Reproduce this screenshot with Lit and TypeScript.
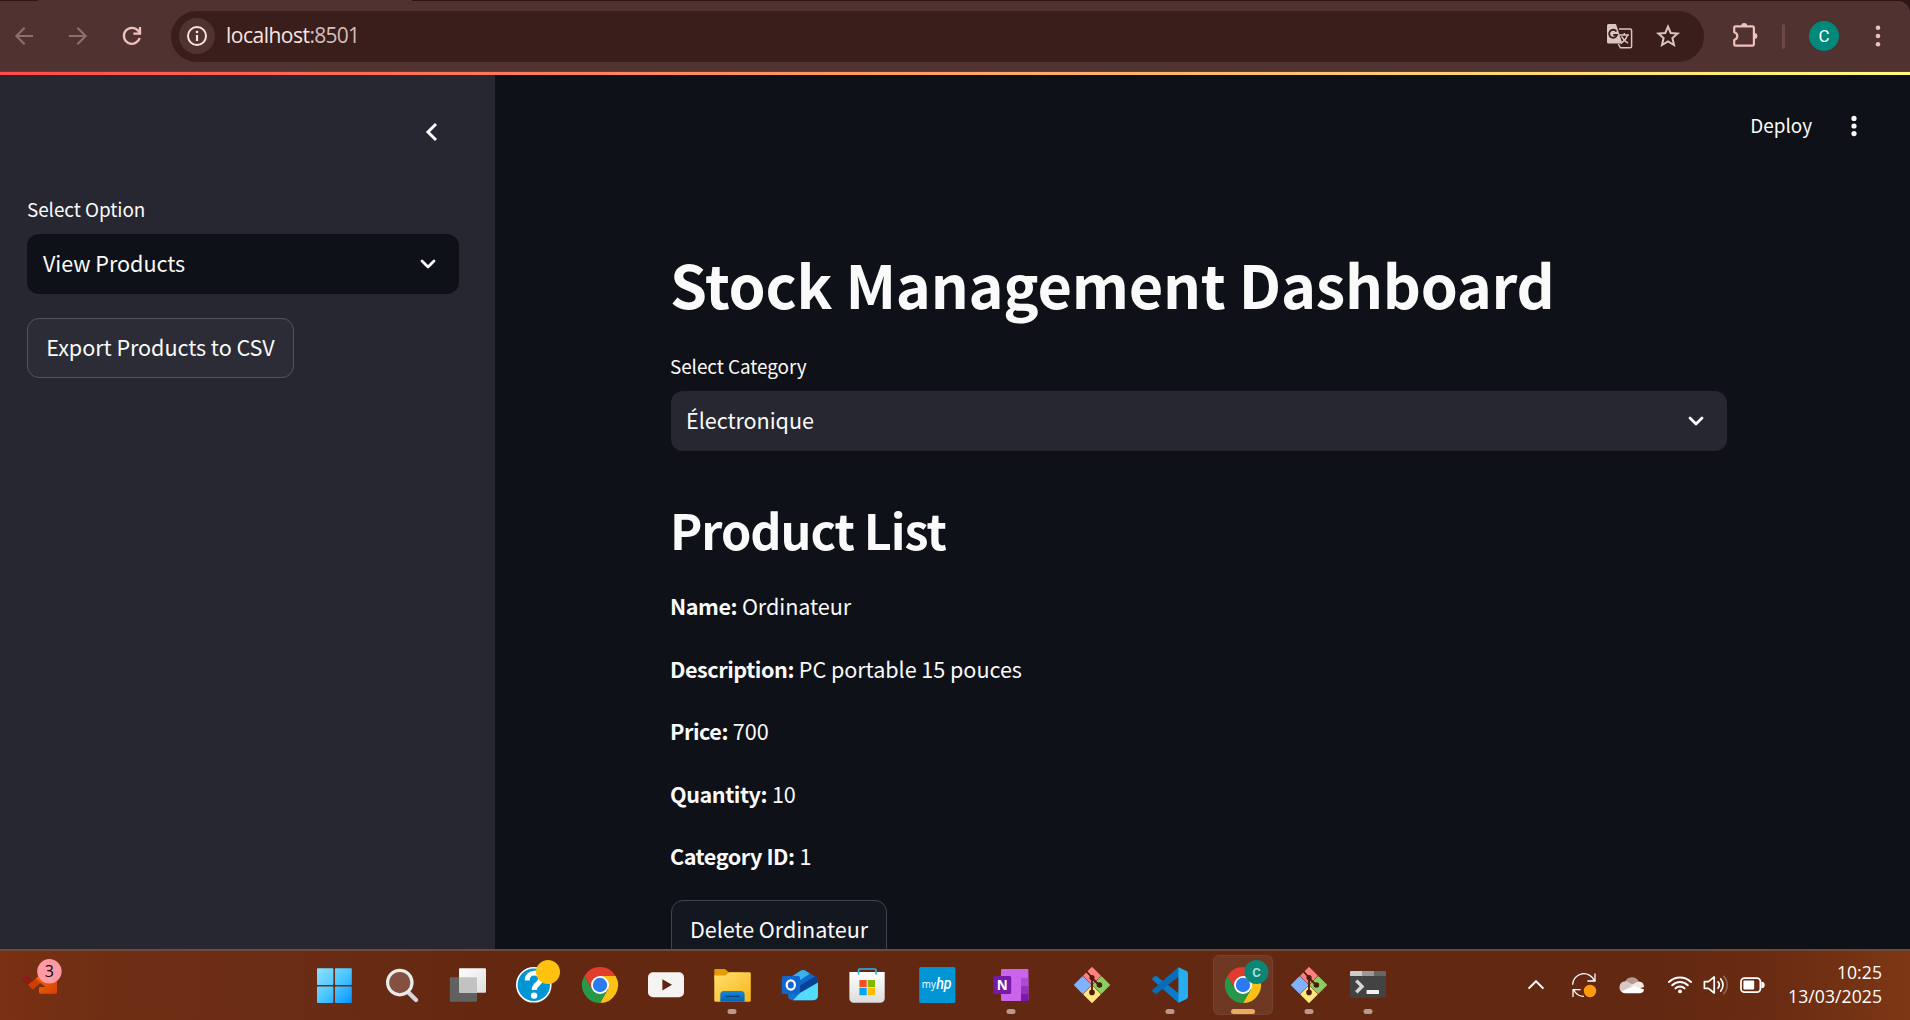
import { LitElement, html, css, svg, nothing } from "lit";
import { customElement, property } from "lit/decorators.js";

const chromeLogo = svg`
  <path d="M30 30 L30 21 H45.6 A18 18 0 0 1 30 48 L37.8 34.5 Z" fill="#fbc116"/>
  <path d="M14.4 21 A18 18 0 0 1 45.6 21 H30 L22.2 34.5Z" fill="#e33b2e"/>
  <path d="M14.4 21 L22.2 34.5 L30 30 L37.8 34.5 L30 48 A18 18 0 0 1 14.4 21 Z" fill="#279847"/>
  <circle cx="30" cy="30" r="9" fill="#fff"/>
  <circle cx="30" cy="30" r="7.2" fill="#2a7af0"/>`;

const gitLogo = svg`
  <g stroke-linejoin="round" stroke-width="1.4">
    <path d="M30 12.7 L38 20.7 L30 28.7 L22 20.7 Z" fill="#ff8080" stroke="#ff8080"/>
    <path d="M39.3 22 L47.3 30 L39.3 38 L31.3 30 Z" fill="#8bcf63" stroke="#8bcf63"/>
    <path d="M20.7 22 L28.7 30 L20.7 38 L12.7 30 Z" fill="#80b3ff" stroke="#80b3ff"/>
    <path d="M30 31.3 L38 39.3 L30 47.3 L22 39.3 Z" fill="#ffe680" stroke="#ffe680"/>
  </g>
  <path d="M24.5 16.5 L30 22.5 V37 M30 23 L37 30" stroke="#4c1b0c" stroke-width="1.8" fill="none"/>
  <g fill="#4c1b0c"><circle cx="30" cy="22.6" r="2.6"/><circle cx="37.4" cy="30" r="2.8"/><circle cx="30" cy="37.4" r="2.8"/></g>`;

const icons: Record<string, unknown> = {
  start: svg`
    <defs><linearGradient id="w" gradientUnits="userSpaceOnUse" x1="13" y1="13" x2="48" y2="48">
      <stop offset="0" stop-color="#8fe0ff"/><stop offset=".5" stop-color="#4cc8ff"/><stop offset="1" stop-color="#0793ff"/></linearGradient></defs>
    <g fill="url(#w)"><rect x="13" y="13.2" width="16.4" height="16.8" rx=".8"/><rect x="31" y="13.2" width="16.8" height="16.8" rx=".8"/>
    <rect x="13" y="31.6" width="16.4" height="16.4" rx=".8"/><rect x="31" y="31.6" width="16.8" height="16.4" rx=".8"/></g>`,
  search: svg`
    <path d="M36.5 37.5 L44 45" stroke="#d3d7dd" stroke-width="4.4" stroke-linecap="round"/>
    <circle cx="27.8" cy="27.6" r="12.2" fill="#84503f" stroke="#e9ebee" stroke-width="3.2"/>`,
  views: svg`
    <defs><linearGradient id="v" x1="0" y1="0" x2="1" y2="1"><stop offset="0" stop-color="#fff"/><stop offset="1" stop-color="#dedede"/></linearGradient></defs>
    <rect x="11.8" y="22.3" width="27.2" height="24.4" rx="1" fill="#616161"/>
    <rect x="21" y="13.2" width="27" height="24.6" rx="1" fill="url(#v)"/>
    <path d="M21 22.3 H38 a1 1 0 0 1 1 1 V37.8 H22 a1 1 0 0 1 -1 -1 Z" fill="#c2c2c2"/>`,
  help: svg`
    <circle cx="29.8" cy="29.8" r="17" fill="#0096d6" stroke="#fff" stroke-width="1.6"/>
    <path d="M23.2 25.4 C23.2 15.8 37.2 16 36.6 24.2 C36.2 29.2 30.2 29 30.2 35" fill="none" stroke="#fff" stroke-width="5"/>
    <circle cx="30.1" cy="40.6" r="3.2" fill="#fff"/>
    <circle cx="44" cy="17" r="12" fill="#ffc20e"/>`,
  chrome: chromeLogo,
  youtube: svg`
    <rect x="12" y="17.3" width="36" height="25" rx="5" fill="#f6f3f2"/>
    <path d="M26.4 24.3 L36 29.8 L26.4 35.4 Z" fill="#5d2511"/>`,
  explorer: svg`
    <defs><linearGradient id="f" x1="0" y1="0" x2="1" y2="1"><stop offset="0" stop-color="#ffe06e"/><stop offset="1" stop-color="#f7b51a"/></linearGradient>
    <linearGradient id="fb" x1="0" y1="0" x2="0" y2="1"><stop offset="0" stop-color="#1389dc"/><stop offset="1" stop-color="#0462b0"/></linearGradient></defs>
    <path d="M12.3 15.2 a1.2 1.2 0 0 1 1.2 -1.2 H23 L27 17.5 H40 V24 H12.3 Z" fill="#e29c06"/>
    <path d="M12.3 20.5 H23.5 L27.3 17.2 H47.6 a1.2 1.2 0 0 1 1.2 1.2 V45.6 a1.1 1.1 0 0 1 -1.2 1.1 H13.4 a1.1 1.1 0 0 1 -1.1 -1.1 Z" fill="url(#f)"/>
    <path d="M18.3 46.7 V39.6 a3.6 3.6 0 0 1 3.6 -3.6 H39 a3.6 3.6 0 0 1 3.6 3.6 V46.7 Z" fill="url(#fb)"/>
    <path d="M23.5 41.4 H37.5" stroke="#06427c" stroke-width="1.3"/>`,
  outlook: svg`
    <path d="M18 24 L31 15.6 Q33 14.6 35 15.6 L46 22.6 Q48 24 48 26 V40 Q48 45.2 43 45.2 H23 Q18 45.2 18 40 Z" fill="#1273cf"/>
    <path d="M18 24 L31 15.6 Q33 14.6 35 15.6 L40 18.8 L24 29 L18 30 Z" fill="#35b4ea"/>
    <path d="M28 27 L40 18.8 L46 22.6 L30 33 Z" fill="#1168cb"/>
    <path d="M30 30.5 L46 21 Q48 22.6 48 26 V28 L30 38 Z" fill="#0a4298"/>
    <path d="M48 27.6 V40 Q48 45.2 43 45.2 H23 L30 38 Z" fill="#52dcfa"/>
    <rect x="11.8" y="21" width="18.2" height="18" rx="1.8" fill="#1066cc"/>
    <ellipse cx="20.8" cy="30" rx="4.1" ry="4.6" fill="none" stroke="#fff" stroke-width="2.2"/>`,
  store: svg`
    <defs><linearGradient id="s" x1="0" y1="0" x2="0" y2="1"><stop offset="0" stop-color="#fff"/><stop offset="1" stop-color="#dcdcdc"/></linearGradient></defs>
    <path d="M12.4 17 H47.7 V43.5 a4.3 4.3 0 0 1 -4.3 4.3 H16.7 a4.3 4.3 0 0 1 -4.3 -4.3 Z" fill="url(#s)"/>
    <path d="M21.6 19.6 V15 a1 1 0 0 1 1 -1 H38 a1 1 0 0 1 1 1 V19.6" fill="none" stroke="#2bb5ea" stroke-width="1.7"/>
    <rect x="22.4" y="25" width="7.3" height="7.2" fill="#f25022"/><rect x="30.7" y="25" width="7.3" height="7.2" fill="#7fba00"/>
    <rect x="22.4" y="33" width="7.3" height="7.2" fill="#00a4ef"/><rect x="30.7" y="33" width="7.3" height="7.2" fill="#ffb900"/>`,
  myhp: svg`
    <rect x="12.2" y="12.1" width="36.2" height="35.8" rx="1.5" fill="#0096d6"/>
    <text x="14.8" y="33.2" font-family="Open Sans, sans-serif" font-size="10.5" textLength="14" lengthAdjust="spacingAndGlyphs" fill="#fff">my</text>
    <text x="29.2" y="33.8" font-family="Roboto, sans-serif" font-size="17" font-style="italic" font-weight="500" textLength="15.4" lengthAdjust="spacingAndGlyphs" fill="#fff">hp</text>`,
  onenote: svg`
    <path d="M20 15.2 a1.2 1.2 0 0 1 1.2 -1.2 H46.2 a1.2 1.2 0 0 1 1.2 1.2 V44.8 a1.2 1.2 0 0 1 -1.2 1.2 H21.2 a1.2 1.2 0 0 1 -1.2 -1.2 Z" fill="#cb64ea"/>
    <rect x="40" y="22.8" width="7.4" height="8.2" fill="#ae4bd5"/><rect x="40" y="31" width="7.4" height="7.4" fill="#9332bf"/><rect x="40" y="38.4" width="7.4" height="7.6" fill="#7719aa"/>
    <rect x="12.2" y="21" width="18" height="18" rx="1.6" fill="#7719aa"/>
    <text x="21.2" y="35" text-anchor="middle" font-family="Open Sans, sans-serif" font-size="13.5" font-weight="700" fill="#fff">N</text>`,
  git: gitLogo,
  vscode: svg`
    <path d="M12.6 23 L14.8 21.2 Q15.8 20.6 16.8 21.3 L39 38.6 V47.6 L38 47.4 L12.6 25 Q11.8 24 12.6 23 Z" fill="#0a7cc8"/>
    <path d="M12.6 36.8 L14.8 38.6 Q15.8 39.3 16.8 38.6 L39 21.4 V12.4 L38 12.6 L12.6 34.8 Q11.8 35.8 12.6 36.8 Z" fill="#0a6cb4"/>
    <path d="M38.4 12.2 L46.6 16 Q48 16.8 48 18.2 V41.8 Q48 43.2 46.6 44 L38.4 47.8 Z" fill="#29adf1"/>`,
  chromeProfile: svg`${chromeLogo}
    <circle cx="43.4" cy="17" r="12" fill="#0a8576"/>
    <text x="43.4" y="21.7" text-anchor="middle" font-family="Roboto, sans-serif" font-size="13" font-weight="700" fill="#a9dcd5">C</text>`,
  terminal: svg`
    <path d="M12 18 a2 2 0 0 1 2 -2 H46 a2 2 0 0 1 2 2 V41 a1.8 1.8 0 0 1 -1.8 1.8 H13.8 A1.8 1.8 0 0 1 12 41 Z" fill="#434343"/>
    <path d="M12 21 V17 a1 1 0 0 1 1 -1 H24 V21 Z" fill="#ccc"/><path d="M24 16 H36 V21 H24 Z" fill="#999"/><path d="M36 16 H47 a1 1 0 0 1 1 1 V21 H36 Z" fill="#666"/>
    <path d="M18.3 25.6 L24 31.4 L18.3 37.2" fill="none" stroke="#d8d8d8" stroke-width="3.4"/>
    <rect x="28.6" y="35" width="12.4" height="4" rx=".6" fill="#f1f1f1"/>`,
};

interface TaskApp { icon: string; state?: "running" | "active"; }

const apps: TaskApp[] = [
  { icon: "start" }, { icon: "search" }, { icon: "views" }, { icon: "help" },
  { icon: "chrome" }, { icon: "youtube" }, { icon: "explorer", state: "running" },
  { icon: "outlook" }, { icon: "store" }, { icon: "myhp" },
  { icon: "onenote", state: "running" }, { icon: "git" },
  { icon: "vscode", state: "running" }, { icon: "chromeProfile", state: "active" },
  { icon: "git", state: "running" }, { icon: "terminal", state: "running" },
];

@customElement("browser-toolbar")
class BrowserToolbar extends LitElement {
  static styles = css`
    :host { display: block; box-sizing: border-box; height: 72px; padding-top: 1px;
      background: linear-gradient(90deg, #2e1614 38px, #503331 38px, #503331 412px, #2e1614 412px); }
    .bar { box-sizing: border-box; height: 71px; display: flex; align-items: center; background: #503331;
      border-bottom: 1px solid #54403a; border-radius: 0 12px 0 0; padding: 0 14px 0 6px; }
    svg { display: block; flex: none; }
    .nav { display: flex; gap: 18px; color: #8e6f6c; }
    .reload { color: #efc1bb; }
    .address { box-sizing: border-box; display: flex; align-items: center; width: 1533px; height: 51px; margin-left: 21px;
      border-radius: 26px; background: #3a1e1b; padding: 0 18px 0 8px; color: #d9c5c2; }
    .info { display: flex; width: 36px; height: 36px; border-radius: 50%; background: #503331; align-items: center; justify-content: center; }
    .url { flex: 1; margin-left: 11px; padding-bottom: 2px; font: 21px/30px "Open Sans", sans-serif; letter-spacing: -0.75px; color: #d3bfbc; white-space: nowrap; }
    .host { color: #f8e5e2; letter-spacing: -0.5px; }
    .actions { display: flex; gap: 13px; }
    .ext { margin-left: 23px; color: #efc1bb; }
    .sep { width: 3px; height: 25px; border-radius: 2px; background: #6d4946; margin-left: 19px; }
    .avatar { width: 30px; height: 30px; border-radius: 50%; background: #00897b; margin-left: 24px; text-align: center;
      font: 17px/30px Roboto, sans-serif; color: #fff; }
    .menu { margin-left: 21px; color: #efc1bb; }
  `;
  render() {
    return html`<div class="bar">
      <div class="nav">
        <svg width="36" height="36" viewBox="0 0 36 36" fill="none" stroke="currentColor" stroke-width="2.1"><path d="M27 18 H10.5 M18.6 9.8 L10.4 18 L18.6 26.2"/></svg>
        <svg width="36" height="36" viewBox="0 0 36 36" fill="none" stroke="currentColor" stroke-width="2.1"><path d="M9 18 H25.5 M17.4 9.8 L25.6 18 L17.4 26.2"/></svg>
        <svg class="reload" width="36" height="36" viewBox="0 0 36 36" fill="none" stroke="currentColor" stroke-width="2.3"><path d="M25.6 20 A8 8 0 1 1 24 12.6 L25.6 14.6"/><path d="M26 9 V15.6 H19.4"/></svg>
      </div>
      <div class="address">
        <div class="info"><svg width="22" height="22" viewBox="0 0 22 22"><circle cx="11" cy="11" r="9" fill="none" stroke="#f8e5e2" stroke-width="2"/><path d="M11 10 V16" stroke="#f8e5e2" stroke-width="2.2"/><circle cx="11" cy="7" r="1.3" fill="#f8e5e2"/></svg></div>
        <div class="url"><span class="host">localhost</span>:8501</div>
        <div class="actions">
          <svg width="36" height="36" viewBox="0 0 36 36">
            <path d="M18 11 H29 a1.6 1.6 0 0 1 1.6 1.6 V28.2 a1.6 1.6 0 0 1 -1.6 1.6 H19.4 L17.4 26" fill="none" stroke="#d9c5c2" stroke-width="1.5"/>
            <path d="M7.6 6 H15 L21.4 25.6 H7.6 A1.6 1.6 0 0 1 6 24 V7.6 A1.6 1.6 0 0 1 7.6 6 Z" fill="#d9c5c2"/>
            <path d="M18.3 17 H28 M23.3 15 V17 M26.4 17 Q25 22 19.8 25.4 M20.6 18.4 Q22.6 22.4 27 25.2" fill="none" stroke="#d9c5c2" stroke-width="1.5"/>
            <path d="M15.4 13.4 A4 4 0 1 0 16 16.8 H12.2" fill="none" stroke="#3a1e1b" stroke-width="1.8"/>
          </svg>
          <svg width="36" height="36" viewBox="0 0 36 36"><path d="M18 8.6 L20.7 15 L27.6 15.6 L22.4 20.1 L24 27 L18 23.3 L12 27 L13.6 20.1 L8.4 15.6 L15.3 15 Z" fill="none" stroke="currentColor" stroke-width="2" stroke-linejoin="miter"/></svg>
        </div>
      </div>
      <svg class="ext" width="36" height="36" viewBox="0 0 36 36"><path d="M7.2 9.6 a1.2 1.2 0 0 1 1.2 -1.2 H25.3 a1.6 1.6 0 0 1 1.6 1.6 V26 a1.6 1.6 0 0 1 -1.6 1.6 H8.4 a1.2 1.2 0 0 1 -1.2 -1.2 V22 a4 4 0 0 0 0 -7.8 Z" fill="none" stroke="currentColor" stroke-width="2.2" stroke-linejoin="round"/><path d="M14.2 8 a3 3 0 0 1 6 0 Z M27.4 15 a3 3 0 0 1 0 6 Z" fill="currentColor"/></svg>
      <div class="sep"></div>
      <div class="avatar">C</div>
      <svg class="menu" width="36" height="36" viewBox="0 0 36 36" fill="currentColor"><circle cx="18" cy="9.8" r="2.3"/><circle cx="18" cy="18" r="2.3"/><circle cx="18" cy="26.2" r="2.3"/></svg>
    </div>`;
  }
}

@customElement("select-field")
class SelectField extends LitElement {
  @property() label = "";
  @property() value = "";
  static styles = css`
    :host { display: block; }
    .label { font-size: 18.9px; line-height: 32px; height: 32px; white-space: nowrap; letter-spacing: -0.05px; }
    .box { box-sizing: border-box; display: flex; align-items: center; justify-content: space-between; height: 60px; margin-top: 9px;
      border-radius: 12px; background: var(--select-bg, #262730); padding: 0 19px 0 16px; }
    .value { font-size: 21.6px; line-height: 38px; padding-bottom: 2px; white-space: nowrap; letter-spacing: -0.05px; }
    .label, .value { margin-left: var(--text-shift, 0); }
    svg { display: block; }
  `;
  render() {
    return html`<div class="label">${this.label}</div>
      <div class="box"><span class="value">${this.value}</span>
      <svg width="24" height="24" viewBox="0 0 24 24" fill="none" stroke="#fafafa" stroke-width="2.8" stroke-linecap="round" stroke-linejoin="round"><path d="M6 9 L12 15 L18 9"/></svg></div>`;
  }
}

@customElement("task-bar")
class TaskBar extends LitElement {
  static styles = css`
    :host { display: block; }
    .bar { box-sizing: border-box; height: 71px; display: flex; border-top: 2px solid #714936; padding-top: 4px;
      background: linear-gradient(90deg, #7a3013 0, #6e2e14 110px, #6a2c14 300px, #642811 480px, #632811 1650px, #6a2c12 1780px, #7d3715 1910px);
      color: #fff; }
    .widget { width: 304px; height: 60px; }
    .apps { display: grid; height: 60px;
      grid-template-columns: 68px 66px 66px 66px 66px 66px 68px 67px 70px 74px 81px 78px 73px 66px 59px 60px; }
    .app { box-sizing: border-box; width: 60px; height: 60px; }
    .app.active { background: rgba(255, 255, 255, 0.08); border-radius: 6px; box-shadow: inset 0 0 0 1px rgba(255, 255, 255, 0.05); }
    svg { display: block; flex: none; }
    .tray { display: flex; flex: 1; justify-content: flex-end; align-items: center; height: 60px; padding-right: 28px; }
    .sync { margin-left: 21px; }
    .cloud { margin-left: 18px; }
    .wifi { margin-left: 18px; }
    .vol, .bat { margin-left: 6px; }
    .clock { width: 100px; margin-left: 15px; padding-bottom: 2px; text-align: right; font: 17.6px/24px "Open Sans", sans-serif; letter-spacing: 0.05px; white-space: nowrap; }
  `;
  render() {
    return html`<div class="bar">
      <svg class="widget" viewBox="0 0 304 60">
        <defs><linearGradient id="o" x1="0" y1="0" x2="1" y2="1"><stop offset="0" stop-color="#f06a10"/><stop offset="1" stop-color="#d83f00"/></linearGradient></defs>
        <path d="M26.2 19.4 L32.6 25.8 L28 30.4 L21.6 24 Z" fill="#8f1c12"/>
        <path d="M40.4 20 L45 24.6 L32.6 34.4 L28 29.8 Z" fill="#cf3f05"/>
        <path d="M36 23 L41 20 L57 26 V37.5 a1.3 1.3 0 0 1 -1.3 1.3 H40.3 a1.3 1.3 0 0 1 -1.3 -1.3 V33.4 a1.3 1.3 0 0 1 1.3 -1.3 H45.4 L36 24 Z" fill="url(#o)"/>
        <circle cx="49.4" cy="16.3" r="12.2" fill="#ff99a4"/>
        <text x="49.4" y="22" text-anchor="middle" font-family="Open Sans, sans-serif" font-size="16" fill="#120606">3</text>
      </svg>
      <div class="apps">
        ${apps.map((a) => html`<svg class="app ${a.state ?? ""}" viewBox="0 0 60 60">${icons[a.icon]}
          ${a.state === "active" ? svg`<rect x="18" y="54" width="24" height="5" rx="2.5" fill="#e8ac5e"/>`
            : a.state ? svg`<rect x="25.5" y="54" width="9" height="5" rx="2.5" fill="#b69a90"/>` : nothing}</svg>`)}
      </div>
      <div class="tray">
        <svg width="24" height="24" viewBox="0 0 24 24"><path d="M4.6 15.6 L12 8.2 L19.4 15.6" fill="none" stroke="#fff" stroke-width="2"/></svg>
        <svg class="sync" width="30" height="30" viewBox="0 0 30 30" fill="none" stroke="#fff" stroke-width="1.3"><path d="M3.6 14.8 A11.3 11.3 0 0 1 25.4 10.8 M26 3.4 V11 H18.4 M4 27 V19.6 H11.6 M4.8 20 A11.3 11.3 0 0 0 15 26.4"/><circle cx="21" cy="21" r="6.2" fill="#ff9a0c" stroke="none"/></svg>
        <svg class="cloud" width="30" height="30" viewBox="0 0 30 30"><path d="M8 12 A7.4 7.4 0 0 1 21.6 11.4 L15 17 Z" fill="#b69a8e"/><path d="M8.2 11.2 A6 6 0 0 1 12 12.4 L20 17 L7 23 A6 6 0 0 1 8.2 11.2 Z" fill="#d9c8c1"/><path d="M13 15.8 L19 12.6 A5.6 5.6 0 0 1 22 11.6 A5.6 5.6 0 0 1 27 17 L22 18.6 Z" fill="#f0e9e6"/><path d="M4.4 21.2 L17 15.8 L27 19.6 A4 4 0 0 1 23.4 23.2 H8 A5 5 0 0 1 4.4 21.2 Z" fill="#fff"/></svg>
        <svg class="wifi" width="30" height="30" viewBox="0 0 30 30" fill="none" stroke="#fff" stroke-width="2" stroke-linecap="round"><path d="M4 12 A15.4 15.4 0 0 1 26 12 M7.2 15.3 A10.8 10.8 0 0 1 22.8 15.3 M10.4 18.4 A6.4 6.4 0 0 1 19.6 18.4"/><circle cx="15" cy="21.4" r="1.9" fill="#fff" stroke="none"/></svg>
        <svg class="vol" width="30" height="30" viewBox="0 0 30 30" fill="none" stroke="#fff" stroke-width="1.7" stroke-linecap="round" stroke-linejoin="round"><path d="M3.4 11.6 H7.4 L13.2 7 V23 L7.4 18.4 H3.4 Z M17 11.8 A5 5 0 0 1 17 18.2 M19.8 9 A9.4 9.4 0 0 1 19.8 21"/><path d="M22.8 6.4 A12.6 12.6 0 0 1 22.8 23.6" stroke="#8f6350"/></svg>
        <svg class="bat" width="30" height="30" viewBox="0 0 30 30"><rect x="4" y="8.2" width="19.4" height="14" rx="3.4" fill="none" stroke="#fff" stroke-width="1.8"/><rect x="6.4" y="10.6" width="10.8" height="9" rx="1" fill="#fff"/><path d="M24.4 12.4 a2.6 2.6 0 0 1 0 5.2" fill="#fff" stroke="#fff" stroke-width="1.4"/></svg>
        <div class="clock">10:25<br>13/03/2025</div>
      </div>
    </div>`;
  }
}

@customElement("app-root")
class AppRoot extends LitElement {
  static styles = css`
    :host { display: flex; flex-direction: column; width: 1910px; height: 1020px; overflow: hidden; background: #0e1117;
      color: #fafafa; font-family: "Noto Sans CJK SC", "Noto Sans", sans-serif; }
    .rainbow { height: 3px; flex: none; background: linear-gradient(90deg, #ff4b4b, #fffd80); }
    .page { flex: 1; min-height: 0; display: flex; overflow: hidden; }
    .sidebar { box-sizing: border-box; width: 495px; flex: none; background: #262730; padding: 42px 36px 0 27px; }
    .collapse { display: flex; justify-content: flex-end; height: 30px; padding-right: 12px; margin-bottom: 46px; }
    .sidebar select-field { --select-bg: #0e1117; }
    .button { box-sizing: border-box; display: inline-flex; align-items: center; justify-content: center; height: 60px; border: 1px solid #53545b;
      border-radius: 12px; font-size: 21.6px; line-height: 38px; letter-spacing: -0.06px; padding-bottom: 3px; white-space: nowrap; background: #2b2c36; }
    .export { width: 267px; margin-top: 24px; }
    .main { flex: 1; min-width: 0; }
    .header { display: flex; justify-content: flex-end; align-items: center; height: 102px; gap: 24px; padding-right: 38px; font-size: 18.9px; line-height: 30px; }
    .deploy { padding-bottom: 2px; }
    .content { width: 1056px; margin-left: 176px; }
    svg { display: block; }
    h1 { margin: 66px 0 0 -1px; font-size: 59.4px; line-height: 80px; height: 80px; font-weight: 700; letter-spacing: -0.25px; white-space: nowrap; }
    .category { margin-top: 27px; --text-shift: -1px; }
    h2 { margin: 46px 0 0 -1px; font-size: 48.6px; line-height: 64px; height: 64px; font-weight: 600; letter-spacing: -1.05px; white-space: nowrap; }
    .rows { display: flex; flex-direction: column; gap: 24.5px; margin: 26px 0 0 -1px; }
    .row { font-size: 21.6px; line-height: 38px; height: 38px; letter-spacing: -0.05px; white-space: nowrap; }
    .row b { font-weight: 700; letter-spacing: -0.45px; }
    .delete { width: 216px; margin-top: 25px; background: #131720; border-color: #41444c; }
  `;
  render() {
    const product: [string, string][] = [
      ["Name", "Ordinateur"],
      ["Description", "PC portable 15 pouces"],
      ["Price", "700"],
      ["Quantity", "10"],
      ["Category ID", "1"],
    ];
    return html`
      <browser-toolbar></browser-toolbar>
      <div class="rainbow"></div>
      <div class="page">
        <div class="sidebar">
          <div class="collapse"><svg width="30" height="30" viewBox="0 0 30 30" fill="none" stroke="#fafafa" stroke-width="3"><path d="M19 7 L11 15 L19 23"/></svg></div>
          <select-field label="Select Option" value="View Products"></select-field>
          <div class="button export">Export Products to CSV</div>
        </div>
        <div class="main">
          <div class="header">
            <span class="deploy">Deploy</span>
            <svg width="36" height="36" viewBox="0 0 36 36" fill="#fafafa"><circle cx="18" cy="10.4" r="2.6"/><circle cx="18" cy="18" r="2.6"/><circle cx="18" cy="25.6" r="2.6"/></svg>
          </div>
          <div class="content">
            <h1>Stock Management Dashboard</h1>
            <select-field class="category" label="Select Category" value="Électronique"></select-field>
            <h2>Product List</h2>
            <div class="rows">${product.map(([k, v]) => html`<div class="row"><b>${k}:</b> ${v}</div>`)}</div>
            <div class="button delete">Delete Ordinateur</div>
          </div>
        </div>
      </div>
      <task-bar></task-bar>`;
  }
}
